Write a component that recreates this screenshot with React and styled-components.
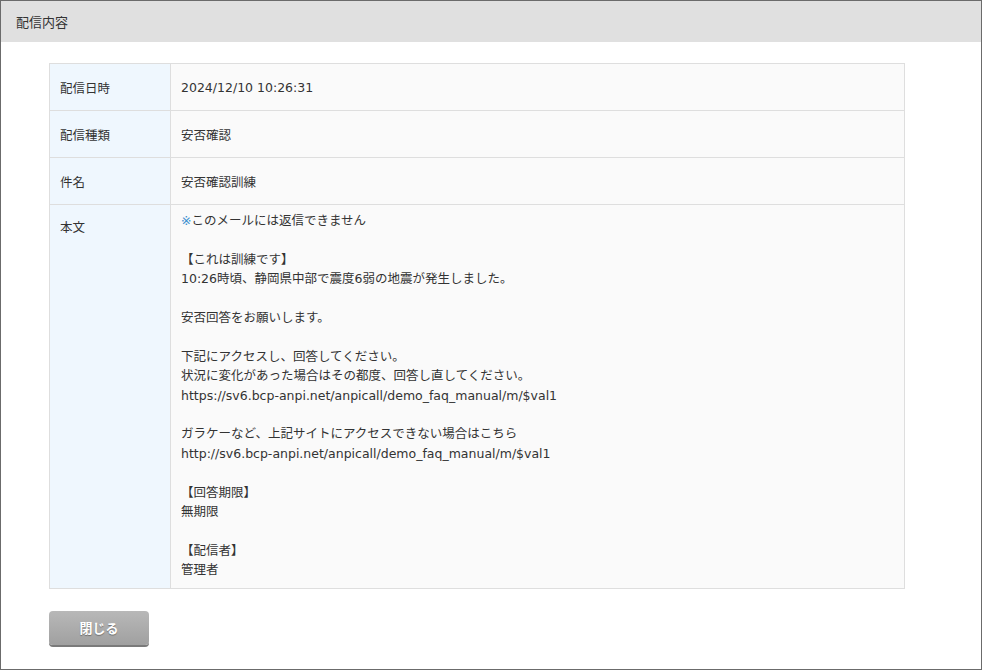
import React from 'react';
import styled, { createGlobalStyle } from 'styled-components';

const Global = createGlobalStyle`
  html, body { margin: 0; padding: 0; background: #fff; }
  body { font-family: "DejaVu Sans", "Noto Sans CJK JP", sans-serif; }
`;

const Frame = styled.div`
  box-sizing: border-box;
  width: 982px;
  height: 670px;
  border: 1px solid #6b6b6b;
  display: flex;
  flex-direction: column;
`;

const Header = styled.div`
  height: 41px;
  background: #e0e0e0;
  display: flex;
  align-items: center;
  padding-left: 15px;
  font-size: 13px;
  color: #333;
`;

const Content = styled.div`
  padding: 21px 76px 0 48px;
`;

const Table = styled.table`
  width: 100%;
  border-collapse: collapse;
  font-size: 12.5px;
  color: #333;
`;

const Th = styled.th`
  width: 121px;
  box-sizing: border-box;
  background: #eff7fe;
  border: 1px solid #dedede;
  text-align: left;
  font-weight: normal;
  padding: ${p => (p.$top ? '12px 10px' : '0 10px')};
  vertical-align: ${p => (p.$top ? 'top' : 'middle')};
  height: 46px;
`;

const Td = styled.td`
  background: #fafafa;
  border: 1px solid #dedede;
  padding: ${p => (p.$top ? '6px 10px 8px' : '0 10px')};
  vertical-align: ${p => (p.$top ? 'top' : 'middle')};
  height: 46px;
  line-height: ${p => (p.$top ? '19.4px' : 'normal')};
  white-space: pre-line;
`;

const Mark = styled.span`
  color: #3a8fd0;
`;

const Button = styled.button`
  margin: 22px 0 0 48px;
  width: 100px;
  height: 34px;
  border: none;
  border-radius: 4px;
  background: linear-gradient(#b8b8b8, #a0a0a0);
  box-shadow: 0 2px 0 #7a7a7a;
  color: #fff;
  font-weight: bold;
  font-size: 13px;
  font-family: inherit;
  text-shadow: 0 1px 1px rgba(0, 0, 0, 0.35);
`;

const body = `このメールには返信できません

【これは訓練です】
10:26時頃、静岡県中部で震度6弱の地震が発生しました。

安否回答をお願いします。

下記にアクセスし、回答してください。
状況に変化があった場合はその都度、回答し直してください。
https://sv6.bcp-anpi.net/anpicall/demo_faq_manual/m/$val1

ガラケーなど、上記サイトにアクセスできない場合はこちら
http://sv6.bcp-anpi.net/anpicall/demo_faq_manual/m/$val1

【回答期限】
無期限

【配信者】
管理者`;

const rows = [
  ['配信日時', '2024/12/10 10:26:31'],
  ['配信種類', '安否確認'],
  ['件名', '安否確認訓練'],
];

export default function App() {
  return (
    <Frame>
      <Global />
      <Header>配信内容</Header>
      <Content>
        <Table>
          <tbody>
            {rows.map(([k, v]) => (
              <tr key={k}>
                <Th>{k}</Th>
                <Td>{v}</Td>
              </tr>
            ))}
            <tr>
              <Th $top>本文</Th>
              <Td $top><Mark>※</Mark>{body}</Td>
            </tr>
          </tbody>
        </Table>
      </Content>
      <div>
        <Button>閉じる</Button>
      </div>
    </Frame>
  );
}
